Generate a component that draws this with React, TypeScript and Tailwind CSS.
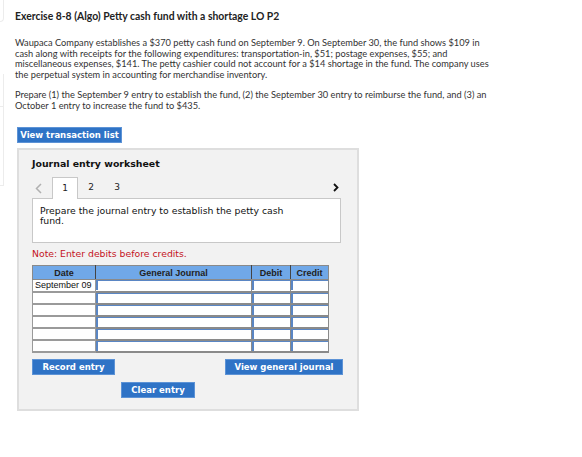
import React from "react";

const rows = ["September 09", "", "", "", "", ""];

function Btn({ children, className = "" }: { children: React.ReactNode; className?: string }) {
  return (
    <button
      className={
        "h-[16px] whitespace-nowrap bg-[#2f73c6] border border-[#5d93d6] text-white font-bold text-[8.5px] leading-[14px] font-['DejaVu_Sans',sans-serif] " +
        className
      }
    >
      {children}
    </button>
  );
}

export default function App() {
  return (
    <div className="w-[582px] h-[457px] bg-white flex overflow-hidden">
      {/* faint edges of panels cut off at the left */}
      <div className="w-[4px] flex flex-col shrink-0">
        <div className="h-[22px] border-r border-b border-[#ececec] rounded-br" />
        <div className="h-[52px]" />
        <div className="h-[32px] border-r border-[#ececec]" />
        <div className="h-[80px] border-r border-t border-b border-[#ececec]" />
      </div>

      <div className="pl-[11px] pt-[10px] flex-1 text-[#222]">
        <h1 className="font-['Lato',sans-serif] font-bold text-[10.4px] leading-[13px] text-[#222] whitespace-nowrap">
          Exercise 8-8 (Algo) Petty cash fund with a shortage LO P2
        </h1>

        <p className="mt-[15px] font-['Lato',sans-serif] text-[9.25px] leading-[10.5px] text-[#333] whitespace-nowrap">
          Waupaca Company establishes a $370 petty cash fund on September 9. On September 30, the fund shows $109 in
          <br />
          cash along with receipts for the following expenditures: transportation-in, $51; postage expenses, $55; and
          <br />
          miscellaneous expenses, $141. The petty cashier could not account for a $14 shortage in the fund. The company uses
          <br />
          the perpetual system in accounting for merchandise inventory.
        </p>

        <p className="mt-[10px] font-['Lato',sans-serif] text-[9.25px] leading-[10.5px] text-[#333] whitespace-nowrap">
          Prepare (1) the September 9 entry to establish the fund, (2) the September 30 entry to reimburse the fund, and (3) an
          <br />
          October 1 entry to increase the fund to $435.
        </p>

        <div className="mt-[16px] ml-[2px] flex">
          <Btn className="w-[105px] border-[#2f73c6]">View transaction list</Btn>
        </div>

        <div className="mt-[5px] ml-[2px] w-[342px] h-[263px] bg-[#f2f2f2] border-2 border-[#dedede] pl-[13px] pr-[16px] pt-[8px] font-['DejaVu_Sans',sans-serif]">
          <div className="font-bold text-[9.4px] leading-[12px] text-[#111]">Journal entry worksheet</div>

          <div className="mt-[6px] flex items-end h-[22px]">
            <div className="w-[20px] h-[20px] flex items-center pl-[3px]">
              <svg width="7" height="11" viewBox="0 0 7 11">
                <polyline points="6,1 1.5,5.5 6,10" fill="none" stroke="#b0b0b0" strokeWidth="1.5" />
              </svg>
            </div>
            <div className="w-[26px] h-[22px] bg-white border border-[#c8c8c8] border-b-0 flex items-center justify-center text-[9px] text-[#222] relative top-[1px]">
              1
            </div>
            <div className="w-[26px] h-[20px] flex items-center justify-center text-[9px] text-[#222]">2</div>
            <div className="w-[26px] h-[20px] flex items-center justify-center text-[9px] text-[#222]">3</div>
            <div className="flex-1" />
            <div className="h-[20px] flex items-start pt-[5px] pr-[2px]">
              <svg width="6" height="9" viewBox="0 0 6 9">
                <polyline points="1,1 4.5,4.5 1,8" fill="none" stroke="#111" strokeWidth="1.8" />
              </svg>
            </div>
          </div>

          <div className="w-[309px] h-[45px] bg-white border border-[#c8c8c8] pl-[7px] pt-[7px] text-[9.3px] leading-[10px] text-[#111]">
            Prepare the journal entry to establish the petty cash
            <br />
            fund.
          </div>

          <div className="mt-[5px] text-[9.3px] leading-[12px] text-[#c4121d]">Note: Enter debits before credits.</div>

          <table className="mt-[5px] border-collapse font-['Liberation_Sans',sans-serif] text-[9px]">
            <thead>
              <tr className="bg-[#70a8e8] h-[14px]">
                <th className="w-[63px] border border-[#8a8a8a] border-r-[#444] font-bold text-[#222] leading-[12px] p-0">Date</th>
                <th className="w-[156px] border border-[#8a8a8a] border-r-[#444] font-bold text-[#222] leading-[12px] p-0">General Journal</th>
                <th className="w-[39px] border border-[#8a8a8a] border-r-[#444] font-bold text-[#222] leading-[12px] p-0">Debit</th>
                <th className="w-[38px] border border-[#8a8a8a] font-bold text-[#222] leading-[12px] p-0">Credit</th>
              </tr>
            </thead>
            <tbody>
              {rows.map((d, i) => (
                <tr key={i} className="h-[12px]">
                  <td className="bg-white border border-[#9a9a9a] border-b-2 pl-[2px] leading-[10px] text-[#111]">{d}</td>
                  <td className="bg-white border-x border-[#8a8a8a] border-b-2 p-0">
                    <div className="h-[10px] border-l-2 border-t border-[#5a86c4]" />
                  </td>
                  <td className="bg-white border-x border-[#8a8a8a] border-b-2 p-0">
                    <div className="h-[10px] border-l-2 border-t border-[#5a86c4]" />
                  </td>
                  <td className="bg-white border-x border-[#8a8a8a] border-b-2 p-0">
                    <div className="h-[10px] border-l-2 border-t border-[#5a86c4]" />
                  </td>
                </tr>
              ))}
            </tbody>
          </table>

          <div className="mt-[6px] flex justify-between w-[311px]">
            <Btn className="w-[83px]">Record entry</Btn>
            <Btn className="w-[118px]">View general journal</Btn>
          </div>
          <div className="mt-[7px] flex pl-[89px]">
            <Btn className="w-[74px]">Clear entry</Btn>
          </div>
        </div>
      </div>
    </div>
  );
}
